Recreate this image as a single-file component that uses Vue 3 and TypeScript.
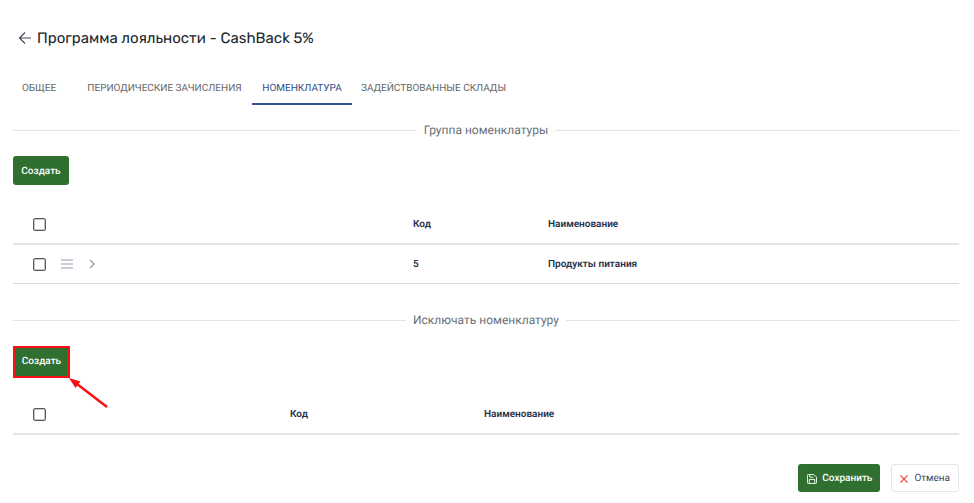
<script setup lang="ts">
import { ref } from 'vue'

const tabs: string[] = ['Общее', 'Периодические зачисления', 'Номенклатура', 'Задействованные склады']
const activeTab = ref<number>(2)

interface Row {
  code: string
  name: string
}
const groups: Row[] = [{ code: '5', name: 'Продукты питания' }]
</script>

<template>
  <main class="page">
    <header class="heading">
      <button class="back" type="button" aria-label="Назад">
        <svg width="14" height="14" viewBox="0 0 14 14" fill="none" stroke="currentColor" stroke-width="1.2">
          <path d="M13 7H1.5M7 1.5 1.5 7 7 12.5" />
        </svg>
      </button>
      <h1>Программа лояльности - CashBack 5%</h1>
    </header>

    <nav class="tabs" role="tablist">
      <button
        v-for="(tab, i) in tabs"
        :key="tab"
        type="button"
        role="tab"
        class="tab"
        :class="{ active: i === activeTab }"
        :aria-selected="i === activeTab"
        @click="activeTab = i"
      >{{ tab }}</button>
    </nav>

    <section>
      <h2 class="divider">Группа номенклатуры</h2>
      <button class="btn create" type="button">Создать</button>
      <table class="groups">
        <colgroup><col class="c-check" /><col class="c-tools" /><col class="c-code" /><col /></colgroup>
        <thead>
          <tr>
            <th><input type="checkbox" aria-label="Выбрать все группы" /></th>
            <th></th>
            <th class="text">Код</th>
            <th class="text">Наименование</th>
          </tr>
        </thead>
        <tbody>
          <tr v-for="row in groups" :key="row.code">
            <td><input type="checkbox" :aria-label="row.name" /></td>
            <td>
              <div class="tools">
                <button type="button" aria-label="Меню">
                  <svg width="12" height="10" viewBox="0 0 12 10" fill="none" stroke="currentColor" stroke-width="1.1">
                    <path d="M0 1h12M0 5h12M0 9h12" />
                  </svg>
                </button>
                <button type="button" aria-label="Развернуть">
                  <svg width="6" height="10" viewBox="0 0 6 10" fill="none" stroke="currentColor" stroke-width="1.3">
                    <path d="m1 1 4 4-4 4" />
                  </svg>
                </button>
              </div>
            </td>
            <td class="text">{{ row.code }}</td>
            <td class="text">{{ row.name }}</td>
          </tr>
        </tbody>
      </table>
    </section>

    <section class="excluded">
      <h2 class="divider">Исключать номенклатуру</h2>
      <div class="callout">
        <button class="btn create marked" type="button">Создать</button>
        <svg class="arrow" width="42" height="34" viewBox="0 0 42 34" aria-hidden="true">
          <path d="M8 7 38 30" stroke="#fb0d12" stroke-width="2.4" />
          <path d="M0 1 11.500 4.500 9 7.500 6.500 11Z" fill="#fb0d12" />
        </svg>
      </div>
      <table class="items">
        <colgroup><col class="c-check" /><col class="c-tools" /><col class="c-code" /><col /></colgroup>
        <thead>
          <tr>
            <th><input type="checkbox" aria-label="Выбрать всю номенклатуру" /></th>
            <th></th>
            <th class="text">Код</th>
            <th class="text">Наименование</th>
          </tr>
        </thead>
      </table>
    </section>

    <footer class="actions">
      <button class="btn save" type="button">
        <svg width="10" height="10" viewBox="0 0 11 11" fill="none" stroke="currentColor" stroke-linejoin="round">
          <path d="M1.500 .5H7.500L10.500 3.500V9.500Q10.500 10.500 9.500 10.500H1.500Q.5 10.500 .5 9.500V1.500Q.5 .5 1.500 .5Z" />
          <path d="M3 .5V3.500H7M2.500 10.500V6H8.500V10.500" />
        </svg>
        Сохранить
      </button>
      <button class="btn cancel" type="button">
        <svg width="8" height="8" viewBox="0 0 8 8" fill="none" stroke="#ef4444" stroke-width="1.1">
          <path d="m.5.5 7 7M7.500.5l-7 7" />
        </svg>
        Отмена
      </button>
    </footer>
  </main>
</template>

<style>
body {
  margin: 0;
  background: #fff;
}
</style>

<style scoped>
.page {
  box-sizing: border-box;
  padding: 28px 15px 10px 13px;
  font-family: Roboto, sans-serif;
  font-size: 10px;
  line-height: 12px;
  text-rendering: geometricPrecision;
  color: #27314b;
}
button {
  font: inherit;
  text-rendering: inherit;
  color: inherit;
  padding: 0;
  border: 0;
  background: none;
  cursor: pointer;
}
svg {
  display: block;
}
.heading {
  display: flex;
  align-items: center;
  gap: 5px;
  height: 20px;
  padding-left: 5px;
}
.back {
  color: #444b55;
}
h1 {
  margin: 0;
  font-family: Rubik, Roboto, sans-serif;
  font-size: 15px;
  line-height: 20px;
  font-weight: 400;
  color: #20272f;
}
.tabs {
  display: grid;
  grid-template-columns: 76px 175px 100px 163px;
  height: 35px;
  margin: 22px 0 15px -12px;
}
.tab {
  padding: 4px 0 0;
  border-bottom: 2px solid transparent;
  text-transform: uppercase;
  white-space: nowrap;
  color: #666;
}
.tab.active {
  color: #2f4d86;
  border-color: #34528b;
}
.divider {
  display: flex;
  align-items: center;
  gap: 7px;
  margin: 0 0 16px;
  font-size: 12px;
  line-height: 20px;
  font-weight: 400;
  color: #69717a;
}
.divider::before,
.divider::after {
  content: '';
  flex: 1;
  border-top: 1px solid #e2e3e5;
}
.excluded {
  margin-top: 26px;
}
.btn {
  display: inline-flex;
  align-items: center;
  justify-content: center;
  border-radius: 3px;
  font-weight: 500;
}
.create {
  display: flex;
  box-sizing: border-box;
  width: 56px;
  height: 29px;
  padding-top: 2px;
  background: #2f7030;
  color: #fff;
}
.marked {
  width: 57px;
  height: 32px;
  padding-top: 0;
  border: 2px solid #fb0d12;
  border-radius: 0;
}
.callout {
  position: relative;
}
.arrow {
  position: absolute;
  left: 56px;
  top: 31px;
}
table {
  width: 100%;
  margin-top: 20px;
  table-layout: fixed;
  border-collapse: separate;
  border-spacing: 0;
}
.items {
  margin-top: 17px;
}
.c-check {
  width: 48px;
}
.groups .c-tools {
  width: 352px;
}
.groups .c-code {
  width: 135px;
}
.items .c-tools {
  width: 229px;
}
.items .c-code {
  width: 194px;
}
th,
td {
  box-sizing: border-box;
  height: 39px;
  padding: 0;
  border-bottom: 1px solid #d8dadd;
  text-align: left;
  vertical-align: middle;
  font-weight: 600;
}
th {
  height: 40px;
  border-bottom: 2px solid #e3e4ea;
}
.text {
  padding-top: 2px;
}
input[type='checkbox'] {
  display: block;
  appearance: none;
  box-sizing: border-box;
  width: 13px;
  height: 13px;
  margin: 0 0 0 20px;
  border: 1px solid #5b5b5b;
  border-radius: 2px;
  box-shadow: inset 0 0 0 1px #c4c4c4;
}
input[type='checkbox']:checked {
  background: #2f7030;
}
.tools {
  display: flex;
  align-items: center;
  gap: 16px;
  color: #929bb0;
}
.actions {
  display: flex;
  justify-content: flex-end;
  gap: 11px;
  margin-top: 29px;
}
.save,
.cancel {
  box-sizing: border-box;
  height: 28px;
  gap: 5px;
  padding: 2px 8px 0;
}
.save {
  padding: 2px 8px 0 9px;
  background: #2f7030;
  color: #fff;
}
.cancel {
  gap: 6px;
  border: 1px solid #e3e5e8;
  font-weight: 400;
  color: #3b4453;
}
</style>
